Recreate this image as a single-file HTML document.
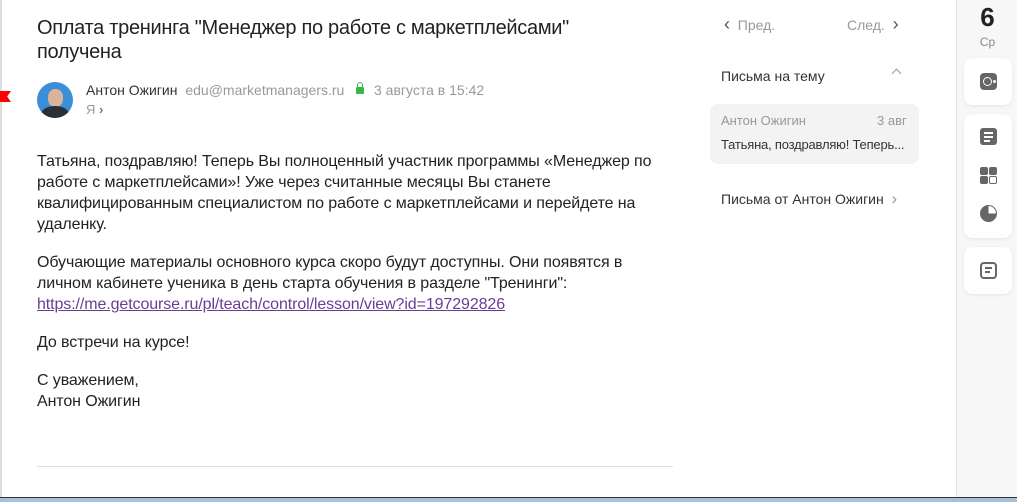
<!DOCTYPE html>
<html><head><meta charset="utf-8"><style>
*{margin:0;padding:0;box-sizing:border-box}
body{width:1017px;height:502px;overflow:hidden;background:#fff;font-family:"Liberation Sans","Noto Sans CJK SC",sans-serif;color:#222;position:relative}
.abs{position:absolute;white-space:nowrap}
.lb{position:absolute;left:0;top:0;width:2px;height:497px;background:#ddd}
h1{position:absolute;left:37px;top:16px;font-size:20px;font-weight:normal;line-height:24px;letter-spacing:-0.3px;color:#222}
.body{position:absolute;left:37px;top:151px;font-size:16px;line-height:21px;color:#222;letter-spacing:-0.1px}
.body p{margin-bottom:17px}
a{color:#6a3d92}
.side{position:absolute;left:956px;top:0;width:61px;height:497px;background:#f7f7f7;border-left:1px solid #e6e6e6}
.card{position:absolute;left:7px;width:48px;background:#fff;border-radius:8px;box-shadow:0 1px 3px rgba(0,0,0,.08)}
.ic{position:absolute;left:16px;width:17px;height:17px;background:#666;border-radius:3px}
</style></head><body>
<div class="lb"></div>
<div class="abs" style="left:0;top:91px;width:11px;height:11px;background:#f00;clip-path:polygon(0 0,100% 0,65% 50%,100% 100%,0 100%)"></div>
<h1>Оплата тренинга "Менеджер по работе с маркетплейсами"<br>получена</h1>
<div class="abs" style="left:37px;top:82px;width:36px;height:36px;border-radius:50%;background:#3b8ed8;overflow:hidden">
<div style="position:absolute;left:11px;top:7px;width:15px;height:18px;border-radius:45%;background:#d9b39c"></div>
<div style="position:absolute;left:4px;top:24px;width:28px;height:16px;border-radius:50% 50% 0 0;background:#2a2f3a"></div></div>
<div class="abs" style="left:86px;top:82px;font-size:14px;color:#333">Антон Ожигин <span style="color:#999;margin-left:4px">edu@marketmanagers.ru</span></div>
<div class="abs" style="left:356px;top:87px;width:8px;height:7px;background:#3bb54a;border-radius:1px"></div>
<div class="abs" style="left:357px;top:82px;width:6px;height:7px;border:1.5px solid #3bb54a;border-bottom:none;border-radius:3px 3px 0 0"></div>
<div class="abs" style="left:374px;top:82px;font-size:14px;color:#999">3 августа в 15:42</div>
<div class="abs" style="left:86px;top:102px;font-size:13px;color:#999">Я <span style="color:#777;font-weight:bold">›</span></div>
<div class="body">
<p>Татьяна, поздравляю! Теперь Вы полноценный участник программы «Менеджер по<br>работе с маркетплейсами»! Уже через считанные месяцы Вы станете<br>квалифицированным специалистом по работе с маркетплейсами и перейдете на<br>удаленку.</p>
<p>Обучающие материалы основного курса скоро будут доступны. Они появятся в<br>личном кабинете ученика в день старта обучения в разделе "Тренинги":<br><a href="#">https://me.getcourse.ru/pl/teach/control/lesson/view?id=197292826</a></p>
<p>До встречи на курсе!</p>
<p>С уважением,<br>Антон Ожигин</p>
</div>
<div class="abs" style="left:37px;top:466px;width:636px;height:1px;background:#ddd"></div>
<div class="abs" style="left:0;top:497px;width:1017px;height:1px;background:#333"></div>
<div class="abs" style="left:0;top:498px;width:1017px;height:4px;background:#a9c0dc"></div>

<div class="abs" style="left:724px;top:17px;font-size:14px;color:#999"><span style="color:#555;font-size:18px;line-height:14px">‹</span>&nbsp; Пред.</div>
<div class="abs" style="left:847px;top:17px;font-size:14px;color:#999">След. &nbsp;<span style="color:#555;font-size:18px;line-height:14px">›</span></div>
<div class="abs" style="left:721px;top:68px;font-size:14px;color:#333">Письма на тему</div>
<div class="abs" style="left:893px;top:70px;width:7px;height:7px;border-left:1.5px solid #999;border-top:1.5px solid #999;transform:rotate(45deg)"></div>
<div class="abs" style="left:710px;top:104px;width:209px;height:60px;background:#f3f3f3;border-radius:8px"></div>
<div class="abs" style="left:721px;top:113px;font-size:13px;color:#999">Антон Ожигин</div>
<div class="abs" style="left:877px;top:113px;font-size:13px;color:#999">3 авг</div>
<div class="abs" style="left:721px;top:137px;font-size:13px;color:#333;letter-spacing:-0.2px">Татьяна, поздравляю! Теперь...</div>
<div class="abs" style="left:721px;top:191px;font-size:14px;color:#333">Письма от Антон Ожигин &nbsp;<span style="color:#999;font-size:17px;line-height:14px">›</span></div>

<div class="side">
<div class="abs" style="left:0;width:61px;text-align:center;top:2px;font-size:26px;font-weight:bold;color:#222">6</div>
<div class="abs" style="left:0;width:61px;text-align:center;top:35px;font-size:12px;color:#888">Ср</div>
<div class="card" style="top:58px;height:47px"><div class="ic" style="top:15px;border-radius:4px"></div><div class="abs" style="left:19px;top:19px;width:9px;height:9px;border:1.5px solid #fff;border-radius:50%"></div><div class="abs" style="left:29px;top:22px;width:3px;height:3px;background:#fff;border-radius:50%"></div></div>
<div class="card" style="top:114px;height:124px">
<div class="ic" style="top:14px"><div class="abs" style="left:4px;top:4px;width:9px;height:2px;background:#fff"></div><div class="abs" style="left:4px;top:8px;width:9px;height:2px;background:#fff"></div><div class="abs" style="left:4px;top:12px;width:6px;height:2px;background:#fff"></div></div>
<div class="ic" style="top:53px;background:none"><div class="abs" style="left:0;top:0;width:8px;height:8px;background:#666;border-radius:2px"></div><div class="abs" style="left:9px;top:0;width:8px;height:8px;background:#666;border-radius:2px"></div><div class="abs" style="left:0;top:9px;width:8px;height:8px;background:#666;border-radius:2px"></div><div class="abs" style="left:9px;top:9px;width:8px;height:8px;border:1.5px solid #666;border-radius:2px"></div></div>
<div class="ic" style="top:91px;border-radius:50%;background:conic-gradient(#fff 0 25%,#666 25% 100%);border:1px solid #666"></div></div>
<div class="card" style="top:247px;height:47px"><div class="ic" style="top:15px;background:none;border:2px solid #666;border-radius:4px"><div class="abs" style="left:3px;top:3px;width:7px;height:1.5px;background:#666"></div><div class="abs" style="left:3px;top:7px;width:5px;height:1.5px;background:#666"></div></div></div>
</div>
</body></html>
